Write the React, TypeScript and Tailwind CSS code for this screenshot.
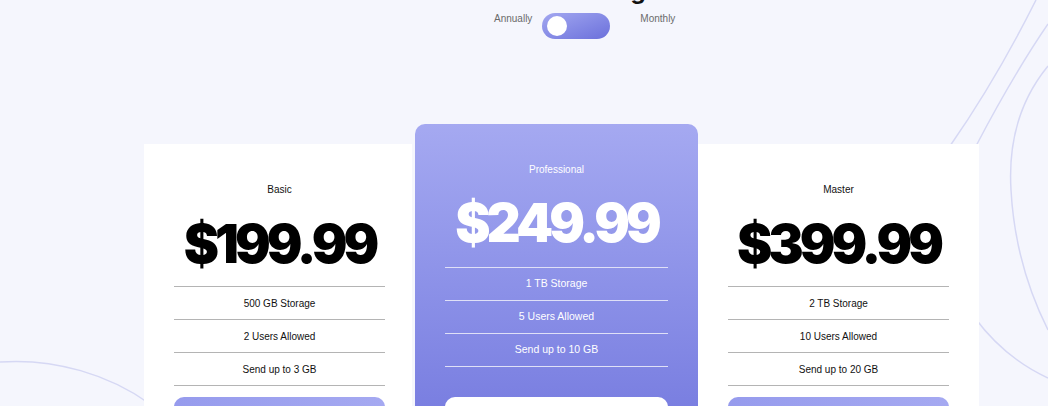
import React from "react";

type Plan = {
  name: string;
  price: string;
  features: string[];
  featured?: boolean;
};

const plans: Plan[] = [
  { name: "Basic", price: "$199.99", features: ["500 GB Storage", "2 Users Allowed", "Send up to 3 GB"] },
  { name: "Professional", price: "$249.99", features: ["1 TB Storage", "5 Users Allowed", "Send up to 10 GB"], featured: true },
  { name: "Master", price: "$399.99", features: ["2 TB Storage", "10 Users Allowed", "Send up to 20 GB"] },
];

const sans = { fontFamily: '"Liberation Sans", Arial, sans-serif' };
const display = { fontFamily: 'Inter, "Noto Sans", sans-serif' };

const Backdrop = () => (
  <svg className="absolute inset-0 pointer-events-none" width="1048" height="406" viewBox="0 0 1048 406" fill="none">
    <g stroke="#d6d8f4" strokeWidth="1.5">
      <path d="M1036 0 C1012 48 982 100 950 146 C930 175 915 200 905 220" />
      <path d="M1048 24 C1022 62 998 104 976 146 C965 168 955 190 948 205" />
      <path d="M1048 66 C1020 100 1008 140 1011 190 C1014 245 1028 290 1048 330" />
      <path d="M975 318 C995 345 1020 365 1048 378" />
      <path d="M0 362 C55 358 110 375 150 404" />
    </g>
  </svg>
);

const PlanCard = ({ plan }: { plan: Plan }) => {
  const f = plan.featured;
  return (
    <div
      className={
        f
          ? "w-[283px] px-[30px] pt-[40px] pb-[40px] rounded-[10px] bg-linear-to-b from-[#a5a9f1] to-[#6f73dc] text-white"
          : plan.name === "Basic"
          ? "w-[268px] pl-[30px] pr-[27px] pt-[40px] pb-[30px] mt-[20px] bg-white text-[#111]"
          : "w-[281px] px-[30px] pt-[40px] pb-[30px] mt-[20px] bg-white text-[#111]"
      }
    >
      <div className="text-center text-[10px] leading-[12px]" style={sans}>
        {plan.name}
      </div>
      <div
        className={
          f
            ? "mt-[21px] mb-[17px] text-center text-[53px] leading-none font-black tracking-[-4px]"
            : "mt-[22px] mb-[15px] text-center text-[53px] leading-none font-black tracking-[-4px] text-black"
        }
        style={display}
      >
        {plan.price}
      </div>
      <div>
        {plan.features.map((feat, i) => (
          <div
            key={i}
            className={
              (f ? "border-[#dfe0f7] text-[10.5px]" : "border-[#b4b4b4] text-[10px]") +
              " h-[33px] border-t flex items-center justify-center" +
              (i === plan.features.length - 1 ? " border-b h-[34px]" : "")
            }
            style={sans}
          >
            {feat}
          </div>
        ))}
      </div>
      <button
        className={
          f
            ? "mt-[30px] w-full h-[40px] rounded-[10px] bg-white"
            : "mt-[11px] w-full h-[40px] rounded-[10px] bg-linear-to-r from-[#969bed] to-[#a5a9f1]"
        }
      />
    </div>
  );
};

export default function App() {
  return (
    <div className="relative w-[1048px] h-[406px] overflow-hidden bg-[#f5f6fd]">
      <Backdrop />
      <div className="relative">
        <h2
          className="-mt-[21px] pl-[514px] text-[24px] leading-none font-bold text-[#111]"
          style={display}
        >
          Our Pricing
        </h2>
        <div className="mt-[10px] pl-[494px] flex items-start text-[10px] leading-[12px] text-[#6b6b6b]" style={sans}>
          <span>Annually</span>
          <div className="ml-[10px] mr-[30px] w-[68px] h-[26px] rounded-full bg-linear-to-br from-[#a3a7f0] to-[#6c70db] flex items-center">
            <div className="ml-[5px] w-5 h-5 rounded-full bg-white" />
          </div>
          <span>Monthly</span>
        </div>
        <div className="mt-[85px] pl-[144px] flex items-start">
          <PlanCard plan={plans[0]} />
          <div className="ml-[3px]">
            <PlanCard plan={plans[1]} />
          </div>
          <PlanCard plan={plans[2]} />
        </div>
      </div>
    </div>
  );
}
